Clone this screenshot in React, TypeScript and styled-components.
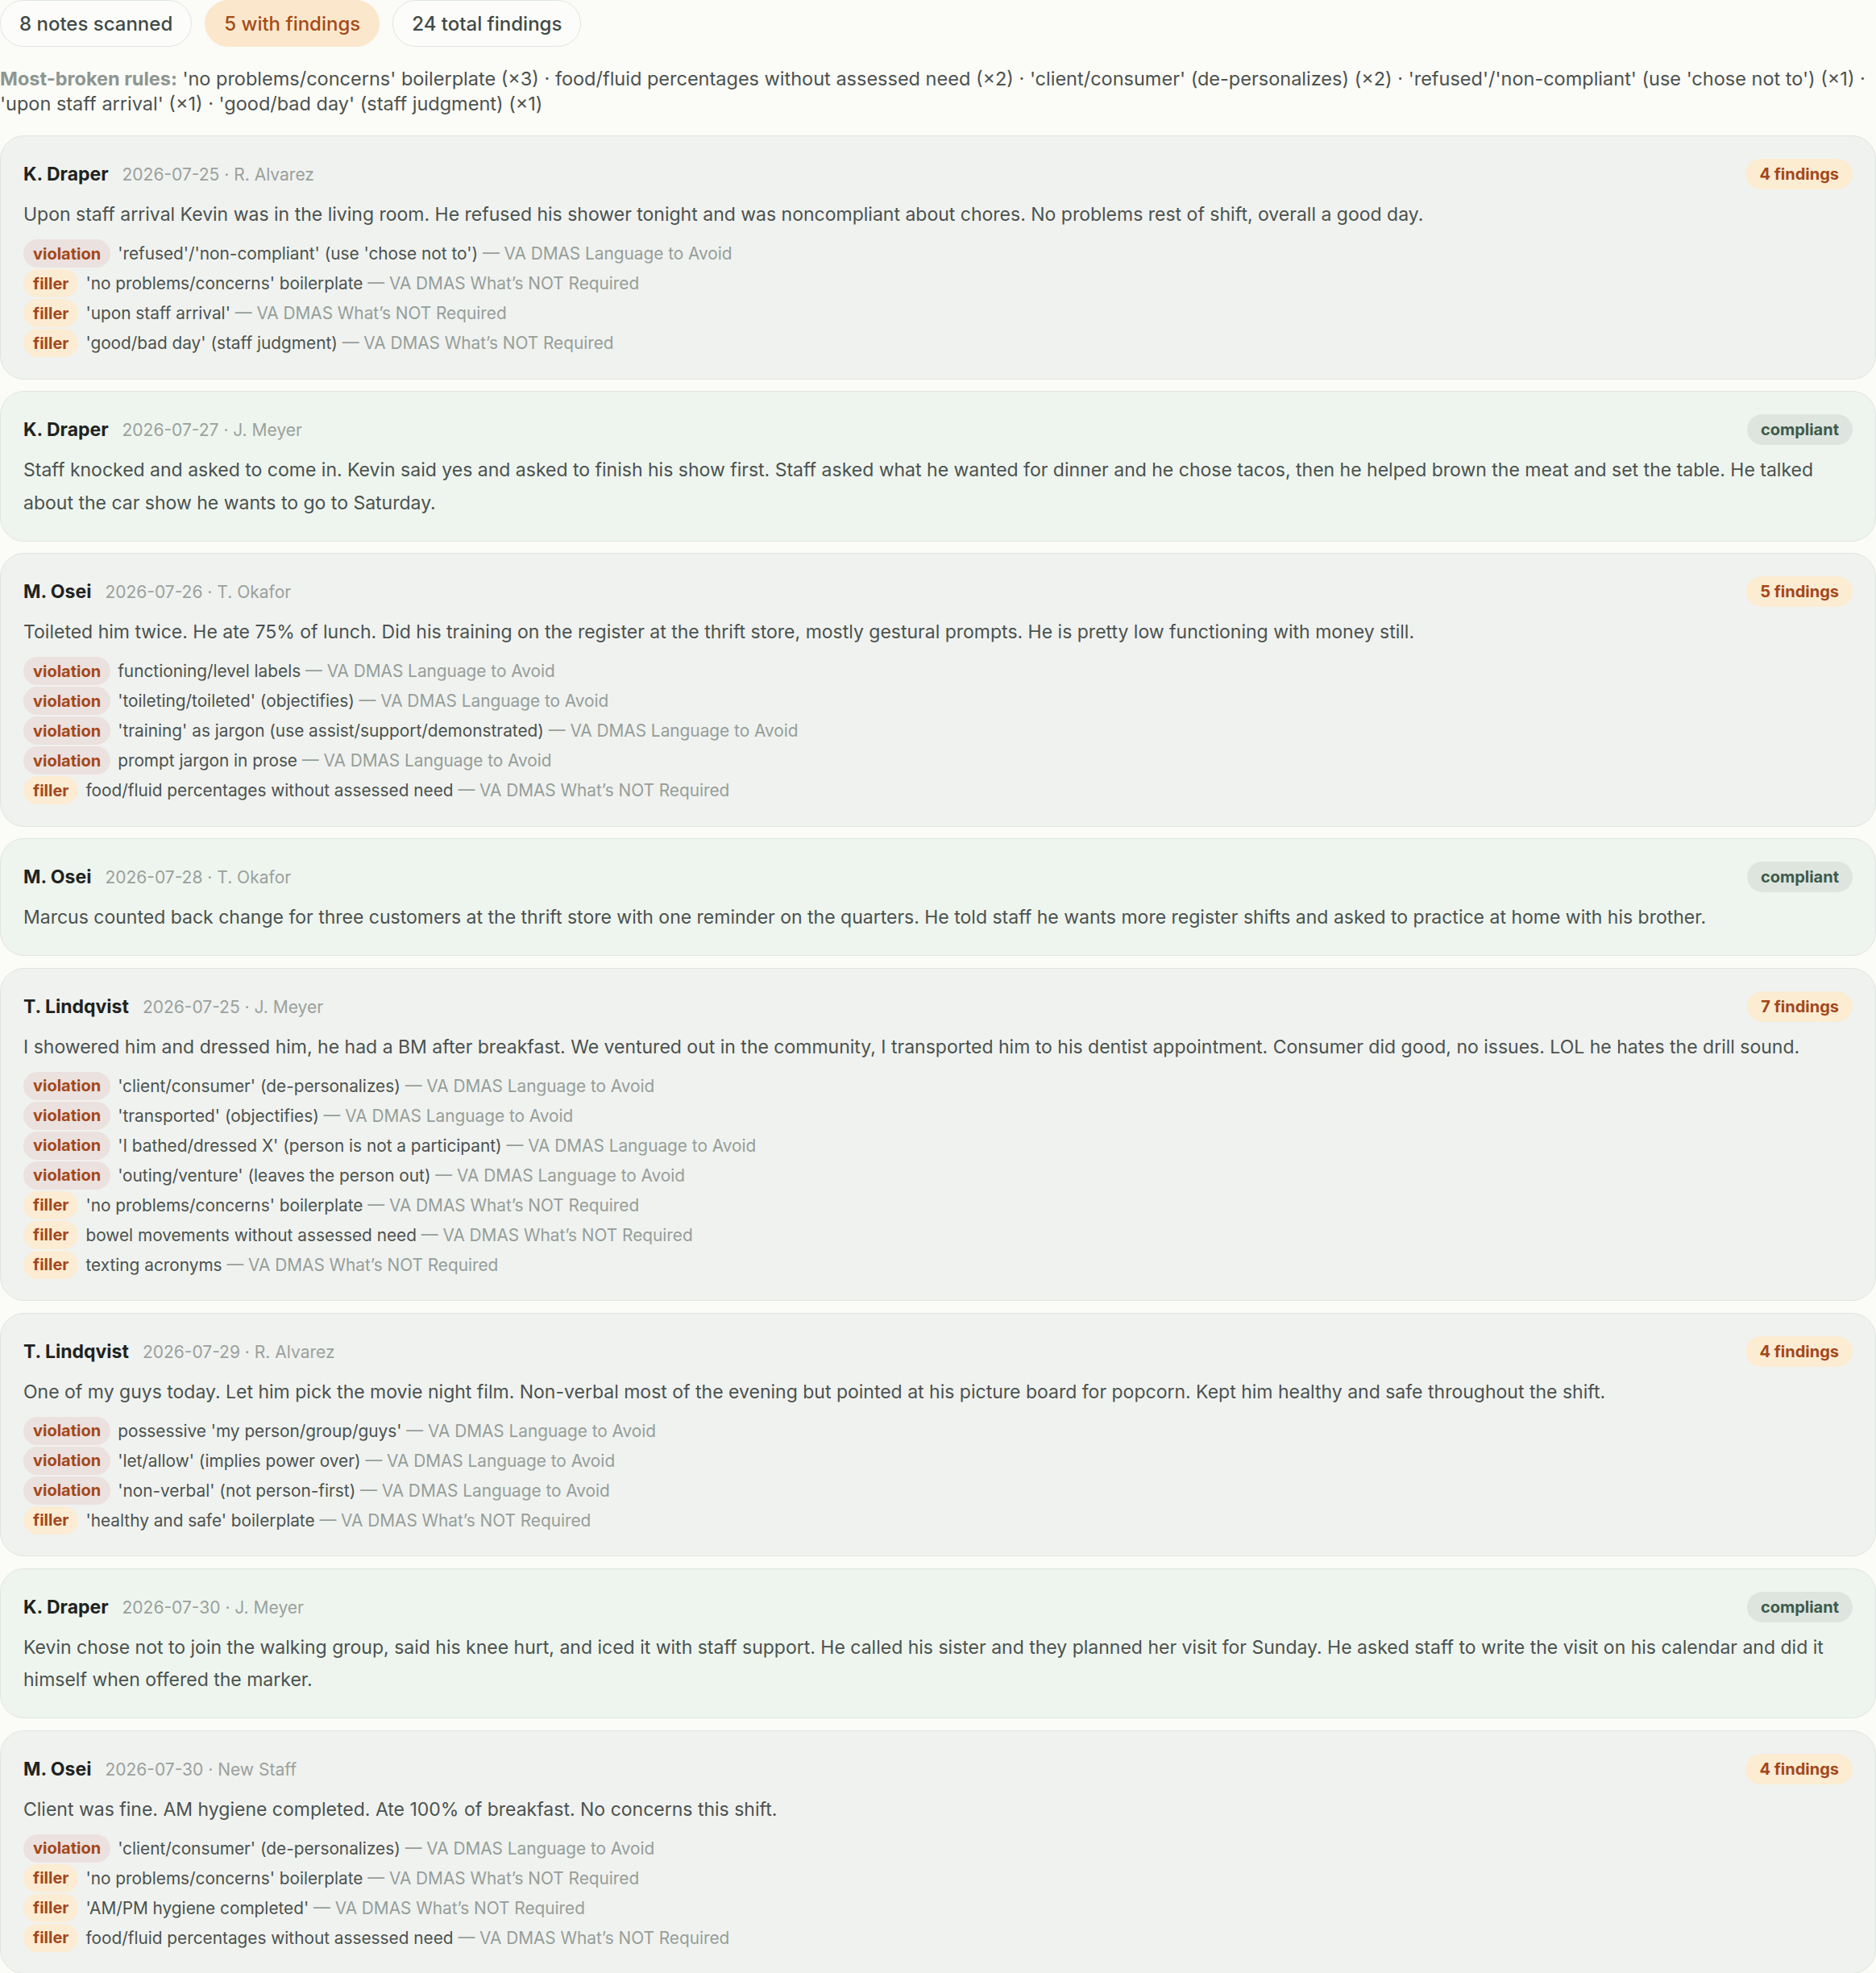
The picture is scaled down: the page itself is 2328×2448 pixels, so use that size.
import React from "react";
import styled, { createGlobalStyle } from "styled-components";

const LANG = "VA DMAS Language to Avoid";
const NOT_REQ = "VA DMAS What\u2019s NOT Required";

type Kind = "violation" | "filler";

type Finding = {
  kind: Kind;
  rule: string;
};

type Note = {
  person: string;
  date: string;
  staff: string;
  text: string;
  findings: Finding[];
};

const v = (rule: string): Finding => ({ kind: "violation", rule });
const f = (rule: string): Finding => ({ kind: "filler", rule });

const NOTES: Note[] = [
  {
    person: "K. Draper",
    date: "2026-07-25",
    staff: "R. Alvarez",
    text: "Upon staff arrival Kevin was in the living room. He refused his shower tonight and was noncompliant about chores. No problems rest of shift, overall a good day.",
    findings: [
      v("'refused'/'non-compliant' (use 'chose not to')"),
      f("'no problems/concerns' boilerplate"),
      f("'upon staff arrival'"),
      f("'good/bad day' (staff judgment)"),
    ],
  },
  {
    person: "K. Draper",
    date: "2026-07-27",
    staff: "J. Meyer",
    text: "Staff knocked and asked to come in. Kevin said yes and asked to finish his show first. Staff asked what he wanted for dinner and he chose tacos, then he helped brown the meat and set the table. He talked about the car show he wants to go to Saturday.",
    findings: [],
  },
  {
    person: "M. Osei",
    date: "2026-07-26",
    staff: "T. Okafor",
    text: "Toileted him twice. He ate 75% of lunch. Did his training on the register at the thrift store, mostly gestural prompts. He is pretty low functioning with money still.",
    findings: [
      v("functioning/level labels"),
      v("'toileting/toileted' (objectifies)"),
      v("'training' as jargon (use assist/support/demonstrated)"),
      v("prompt jargon in prose"),
      f("food/fluid percentages without assessed need"),
    ],
  },
  {
    person: "M. Osei",
    date: "2026-07-28",
    staff: "T. Okafor",
    text: "Marcus counted back change for three customers at the thrift store with one reminder on the quarters. He told staff he wants more register shifts and asked to practice at home with his brother.",
    findings: [],
  },
  {
    person: "T. Lindqvist",
    date: "2026-07-25",
    staff: "J. Meyer",
    text: "I showered him and dressed him, he had a BM after breakfast. We ventured out in the community, I transported him to his dentist appointment. Consumer did good, no issues. LOL he hates the drill sound.",
    findings: [
      v("'client/consumer' (de-personalizes)"),
      v("'transported' (objectifies)"),
      v("'I bathed/dressed X' (person is not a participant)"),
      v("'outing/venture' (leaves the person out)"),
      f("'no problems/concerns' boilerplate"),
      f("bowel movements without assessed need"),
      f("texting acronyms"),
    ],
  },
  {
    person: "T. Lindqvist",
    date: "2026-07-29",
    staff: "R. Alvarez",
    text: "One of my guys today. Let him pick the movie night film. Non-verbal most of the evening but pointed at his picture board for popcorn. Kept him healthy and safe throughout the shift.",
    findings: [
      v("possessive 'my person/group/guys'"),
      v("'let/allow' (implies power over)"),
      v("'non-verbal' (not person-first)"),
      f("'healthy and safe' boilerplate"),
    ],
  },
  {
    person: "K. Draper",
    date: "2026-07-30",
    staff: "J. Meyer",
    text: "Kevin chose not to join the walking group, said his knee hurt, and iced it with staff support. He called his sister and they planned her visit for Sunday. He asked staff to write the visit on his calendar and did it himself when offered the marker.",
    findings: [],
  },
  {
    person: "M. Osei",
    date: "2026-07-30",
    staff: "New Staff",
    text: "Client was fine. AM hygiene completed. Ate 100% of breakfast. No concerns this shift.",
    findings: [
      v("'client/consumer' (de-personalizes)"),
      f("'no problems/concerns' boilerplate"),
      f("'AM/PM hygiene completed'"),
      f("food/fluid percentages without assessed need"),
    ],
  },
];

const TOP_RULES =
  "'no problems/concerns' boilerplate (×3) · food/fluid percentages without assessed need (×2) · 'client/consumer' (de-personalizes) (×2) · 'refused'/'non-compliant' (use 'chose not to') (×1) · 'upon staff arrival' (×1) · 'good/bad day' (staff judgment) (×1)";

const GlobalStyle = createGlobalStyle`
  html, body {
    margin: 0;
    padding: 0;
    background: #fbfbf8;
  }
  body {
    font-family: Inter, "Noto Sans", sans-serif;
    color: #4b524e;
    -webkit-font-smoothing: antialiased;
  }
`;

const Page = styled.main`
  display: flex;
  flex-direction: column;
`;

const Stats = styled.div`
  display: flex;
  gap: 16px;
`;

const StatPill = styled.span<{ $hot?: boolean }>`
  display: inline-flex;
  align-items: center;
  height: 58px;
  box-sizing: border-box;
  padding: 0 23px;
  border-radius: 29px;
  border: 1.5px solid ${({ $hot }) => ($hot ? "#fbe8cc" : "#dfe6e0")};
  background: ${({ $hot }) => ($hot ? "#fbe8cc" : "#fcfdfb")};
  color: ${({ $hot }) => ($hot ? "#a64a17" : "#414a45")};
  font-size: 24px;
  font-weight: 500;
`;

const Rules = styled.div`
  margin: 23.5px 0 23.5px;
  font-size: 23.5px;
  line-height: 31.5px;
  color: #4b524e;
`;

const RulesLabel = styled.span`
  color: #8d968f;
  font-weight: 700;
`;

const List = styled.div`
  display: flex;
  flex-direction: column;
  gap: 14.5px;
`;

const Card = styled.section<{ $clean: boolean }>`
  border: 1.5px solid #e0e5e1;
  border-radius: 30px;
  padding: 28px 28px 26.5px;
  background: ${({ $clean }) => ($clean ? "#eef5ef" : "#f0f2f0")};
`;

const Header = styled.div`
  display: flex;
  align-items: center;
  justify-content: space-between;
  height: 38px;
`;

const Who = styled.div`
  display: flex;
  align-items: baseline;
  gap: 17px;
`;

const Person = styled.span`
  font-size: 23px;
  font-weight: 700;
  color: #1e2320;
`;

const Meta = styled.span`
  font-size: 21px;
  color: #9aa19c;
`;

const Badge = styled.span<{ $clean: boolean }>`
  display: inline-flex;
  align-items: center;
  height: 38px;
  padding: 0 17px;
  border-radius: 19px;
  font-size: 20px;
  font-weight: 700;
  background: ${({ $clean }) => ($clean ? "#dee5df" : "#fbecd2")};
  color: ${({ $clean }) => ($clean ? "#3e5a4a" : "#a3471b")};
`;

const Body = styled.p`
  margin: 11px 0 0;
  font-size: 23px;
  line-height: 40.5px;
  color: #4b524e;
`;

const Findings = styled.ul`
  list-style: none;
  margin: 10.5px 0 0;
  padding: 0;
  display: flex;
  flex-direction: column;
  gap: 2px;
`;

const Row = styled.li`
  display: flex;
  align-items: center;
  gap: 9px;
  height: 35px;
  font-size: 20.8px;
  color: #4b524e;
`;

const Tag = styled.span<{ $kind: Kind }>`
  display: inline-flex;
  align-items: center;
  height: 35px;
  padding: 0 12px;
  border-radius: 18px;
  font-size: 20px;
  font-weight: 700;
  color: #a3471b;
  background: ${({ $kind }) => ($kind === "violation" ? "#ebe1de" : "#fbecd3")};
`;

const Source = styled.span`
  color: #959e98;
`;

const NoteCard = ({ note }: { note: Note }) => {
  const clean = note.findings.length === 0;
  return (
    <Card $clean={clean}>
      <Header>
        <Who>
          <Person>{note.person}</Person>
          <Meta>
            {note.date} · {note.staff}
          </Meta>
        </Who>
        <Badge $clean={clean}>
          {clean ? "compliant" : `${note.findings.length} findings`}
        </Badge>
      </Header>
      <Body>{note.text}</Body>
      {!clean && (
        <Findings>
          {note.findings.map((fi, i) => (
            <Row key={i}>
              <Tag $kind={fi.kind}>{fi.kind}</Tag>
              <span>
                {fi.rule}{" "}
                <Source>— {fi.kind === "violation" ? LANG : NOT_REQ}</Source>
              </span>
            </Row>
          ))}
        </Findings>
      )}
    </Card>
  );
};

export default function App() {
  return (
    <>
      <GlobalStyle />
      <Page>
        <Stats>
          <StatPill>8 notes scanned</StatPill>
          <StatPill $hot>5 with findings</StatPill>
          <StatPill>24 total findings</StatPill>
        </Stats>
        <Rules>
          <RulesLabel>Most-broken rules:</RulesLabel> {TOP_RULES}
        </Rules>
        <List>
          {NOTES.map((n, i) => (
            <NoteCard key={i} note={n} />
          ))}
        </List>
      </Page>
    </>
  );
}
